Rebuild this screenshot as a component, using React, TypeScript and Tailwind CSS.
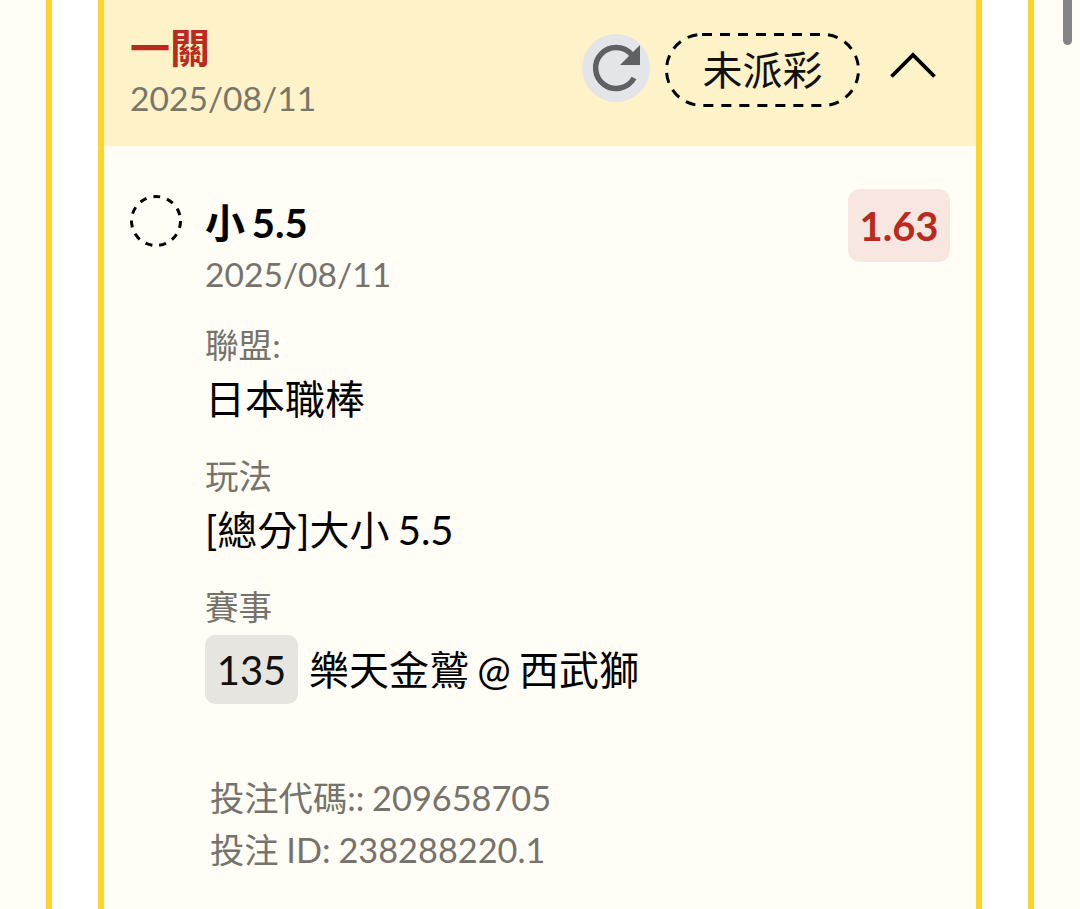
const Field = ({ label, value }: { label: string; value: string }) => (
  <div className="mb-[28px]">
    <p className="text-[33.6px] leading-[44px] text-[#75736c]">{label}</p>
    <p className="mt-[5px] text-[40px] leading-[54px] text-black [word-spacing:-2px]">{value}</p>
  </div>
);

const App = () => {
  return (
    <div className="relative h-[909px] overflow-hidden bg-[#fffdf5] pl-[46px] font-['Lato','Noto_Sans_CJK_TC',sans-serif]">
      {/* outer card */}
      <div className="h-full w-[988px] border-x-[6px] border-[#fdd52b] bg-white px-[46px]">
        {/* inner card */}
        <div className="h-full border-x-[6px] border-[#fdd52b] bg-[#fffdf5]">
          <div className="flex h-[146px] items-start justify-between bg-[#fef2c9] pt-[24px] pr-[40px] pl-[26px]">
            <div>
              <p className="text-[40px] leading-[48px] font-bold text-[#b92a20]">一關</p>
              <p className="mt-[4px] text-[33.6px] leading-[44px] text-[#78766a]">2025/08/11</p>
            </div>
            <div className="mt-[9px] flex items-start">
              <div className="mt-[1px] h-[68px] w-[68px] rounded-full bg-[#e4e5e8]">
                <svg width="68" height="68" viewBox="0 0 68 68" fill="none">
                  <path d="M52 44A20.5 20.5 0 1 1 50 21" stroke="#5f6063" strokeWidth="5.5" />
                  <path d="M58 11V31H38Z" fill="#5f6063" />
                </svg>
              </div>
              <div className="relative ml-[15px] flex h-[74px] w-[195px] items-center justify-center text-[40px] text-[#111]">
                <svg className="absolute inset-0" width="195" height="74" viewBox="0 0 195 74" fill="none">
                  <rect
                    x="1.5"
                    y="1.5"
                    width="192"
                    height="71"
                    rx="35.5"
                    stroke="black"
                    strokeWidth="3"
                    strokeDasharray="10 8"
                  />
                </svg>
                未派彩
              </div>
              <svg className="mt-[19px] ml-[30px]" width="46" height="26" viewBox="0 0 46 26" fill="none">
                <path d="M1.5 24.5L23 3L44.5 24.5" stroke="black" strokeWidth="3.8" />
              </svg>
            </div>
          </div>

          <div className="flex items-start justify-between pt-[43px] pr-[26px] pl-[26px]">
            <div className="flex">
              <svg className="mt-[6px] shrink-0" width="52" height="52" viewBox="0 0 52 52" fill="none">
                <circle cx="26" cy="26" r="24.5" stroke="black" strokeWidth="3" strokeDasharray="7 7" />
              </svg>
              <div className="ml-[23px]">
                <p className="mt-[8px] text-[40px] leading-[52px] font-bold text-black [word-spacing:-3px]">小 5.5</p>
                <p className="mt-[3px] text-[33.6px] leading-[44px] text-[#75736c]">2025/08/11</p>
                <div className="mt-[27px]">
                  <Field label="聯盟:" value="日本職棒" />
                  <Field label="玩法" value="[總分]大小 5.5" />
                  <p className="text-[33.6px] leading-[44px] text-[#75736c]">賽事</p>
                  <div className="mt-[6px] flex items-center">
                    <span className="flex h-[69px] w-[93px] items-center justify-center rounded-[10px] bg-[#e7e5e0] text-[40px] text-[#111]">
                      135
                    </span>
                    <span className="ml-[11px] text-[40px] text-black [word-spacing:-2px]">樂天金鷲 @ 西武獅</span>
                  </div>
                </div>
              </div>
            </div>
            <span className="flex h-[73px] w-[102px] items-center justify-center rounded-[12px] bg-[#f8e7e0] text-[40px] font-bold text-[#b92a20]">
              1.63
            </span>
          </div>

          <div className="mt-[68px] pl-[106px] text-[34.3px] leading-[52px] text-[#75736c] [word-spacing:-1px]">
            <p>投注代碼:: 209658705</p>
            <p>投注 ID: 238288220.1</p>
          </div>
        </div>
      </div>
      {/* scrollbar thumb */}
      <div className="absolute top-0 right-[8px] h-[45px] w-[9px] rounded-b-full bg-[#858585]" />
    </div>
  );
};

export default App;
